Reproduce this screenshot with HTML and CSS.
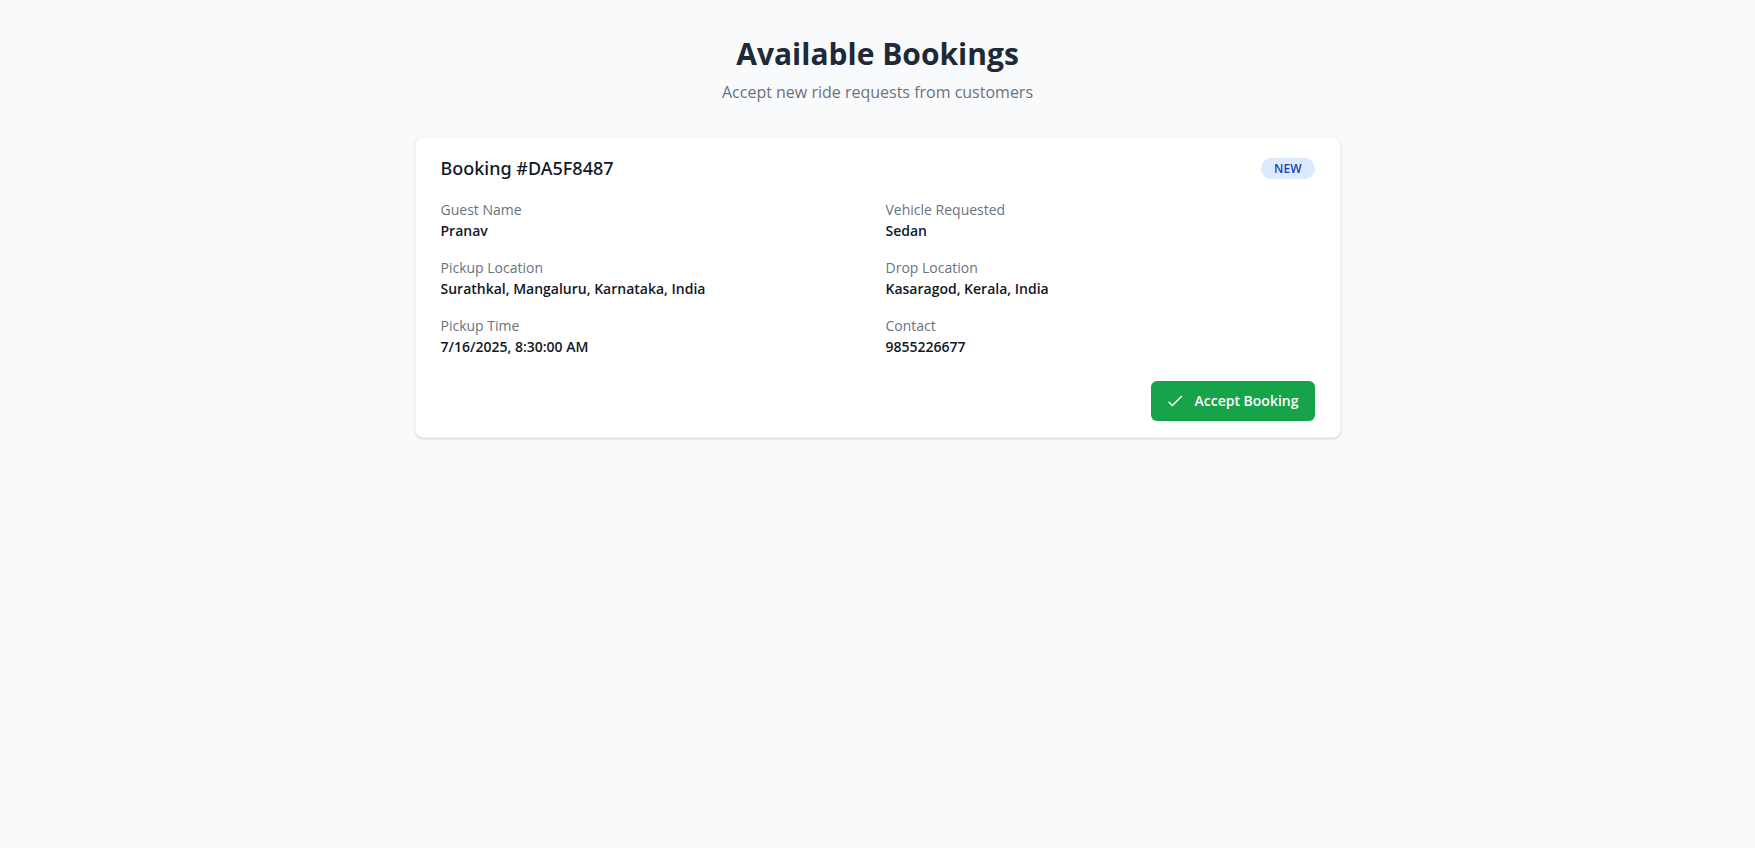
FILE: index.html
```html
<!DOCTYPE html>
<html lang="en">
<head>
  <meta charset="utf-8">
  <meta name="viewport" content="width=device-width, initial-scale=1">
  <title>Available Bookings</title>
  <link rel="stylesheet" href="styles.css">
</head>
<body>
  <main class="page">
    <header class="page-header">
      <h1 class="page-title">Available Bookings</h1>
      <p class="page-subtitle">Accept new ride requests from customers</p>
    </header>

    <article class="card">
      <div class="card-header">
        <h2 class="card-title">Booking #DA5F8487</h2>
        <span class="badge">NEW</span>
      </div>
      <dl class="details">
        <div class="detail"><dt>Guest Name</dt><dd>Pranav</dd></div>
        <div class="detail"><dt>Vehicle Requested</dt><dd>Sedan</dd></div>
        <div class="detail"><dt>Pickup Location</dt><dd>Surathkal, Mangaluru, Karnataka, India</dd></div>
        <div class="detail"><dt>Drop Location</dt><dd>Kasaragod, Kerala, India</dd></div>
        <div class="detail"><dt>Pickup Time</dt><dd>7/16/2025, 8:30:00 AM</dd></div>
        <div class="detail"><dt>Contact</dt><dd>9855226677</dd></div>
      </dl>
      <div class="card-actions">
        <button class="accept-button" type="button">
          <svg class="accept-icon" viewBox="0 0 16 16" aria-hidden="true"><path d="M2 9.2 5.3 12.5 14.5 3.5"/></svg>
          Accept Booking
        </button>
      </div>
    </article>
  </main>
</body>
</html>
```
FILE: styles.css
```css
* {
  box-sizing: border-box;
}

body {
  margin: 0;
  min-height: 100vh;
  background: #f9fafb;
  color: #111827;
  font-family: "Segoe UI", "Open Sans", "Noto Sans", sans-serif;
}

h1, h2, p, dl, dd {
  margin: 0;
}

.page {
  max-width: 958px;
  margin: 0 auto;
  padding: 33px 16px;
}

.page-header {
  margin-bottom: 32px;
  text-align: center;
}

.page-title {
  color: #1f2937;
  font-size: 30px;
  font-weight: 700;
  line-height: 41px;
}

.page-subtitle {
  margin-top: 5px;
  color: #6b7280;
  font-size: 16px;
  line-height: 26px;
}

.card {
  padding: 16px 25px;
  border: 1px solid #f3f4f6;
  border-radius: 8px;
  background: #ffffff;
  box-shadow: 0 1px 3px rgba(0, 0, 0, 0.1), 0 1px 2px rgba(0, 0, 0, 0.06);
}

.card-header {
  display: flex;
  align-items: center;
  justify-content: space-between;
  margin-bottom: 16px;
}

.card-title {
  font-family: "Segoe UI", "Noto Sans", sans-serif;
  font-size: 18px;
  font-weight: 500;
  line-height: 29px;
}

.badge {
  padding: 0 13px;
  border-radius: 11px;
  background: #dbeafe;
  color: #1e40af;
  font-size: 12px;
  font-weight: 600;
  line-height: 21px;
}

.details {
  display: grid;
  grid-template-columns: 1fr 1fr;
  gap: 16px;
  font-size: 14px;
  line-height: 21px;
}

.detail dt {
  color: #6b7280;
}

.detail dd {
  font-weight: 600;
}

.card-actions {
  display: flex;
  justify-content: flex-end;
  margin-top: 24px;
}

.accept-button {
  display: flex;
  align-items: center;
  gap: 11px;
  padding: 9px 16px;
  border: 0;
  border-radius: 6px;
  background: #16a34a;
  color: #ffffff;
  font: inherit;
  font-size: 14px;
  font-weight: 600;
  line-height: 22px;
  cursor: pointer;
}

.accept-icon {
  width: 16px;
  height: 16px;
  fill: none;
  stroke: currentColor;
  stroke-width: 1.5;
  stroke-linecap: round;
  stroke-linejoin: round;
}
```
